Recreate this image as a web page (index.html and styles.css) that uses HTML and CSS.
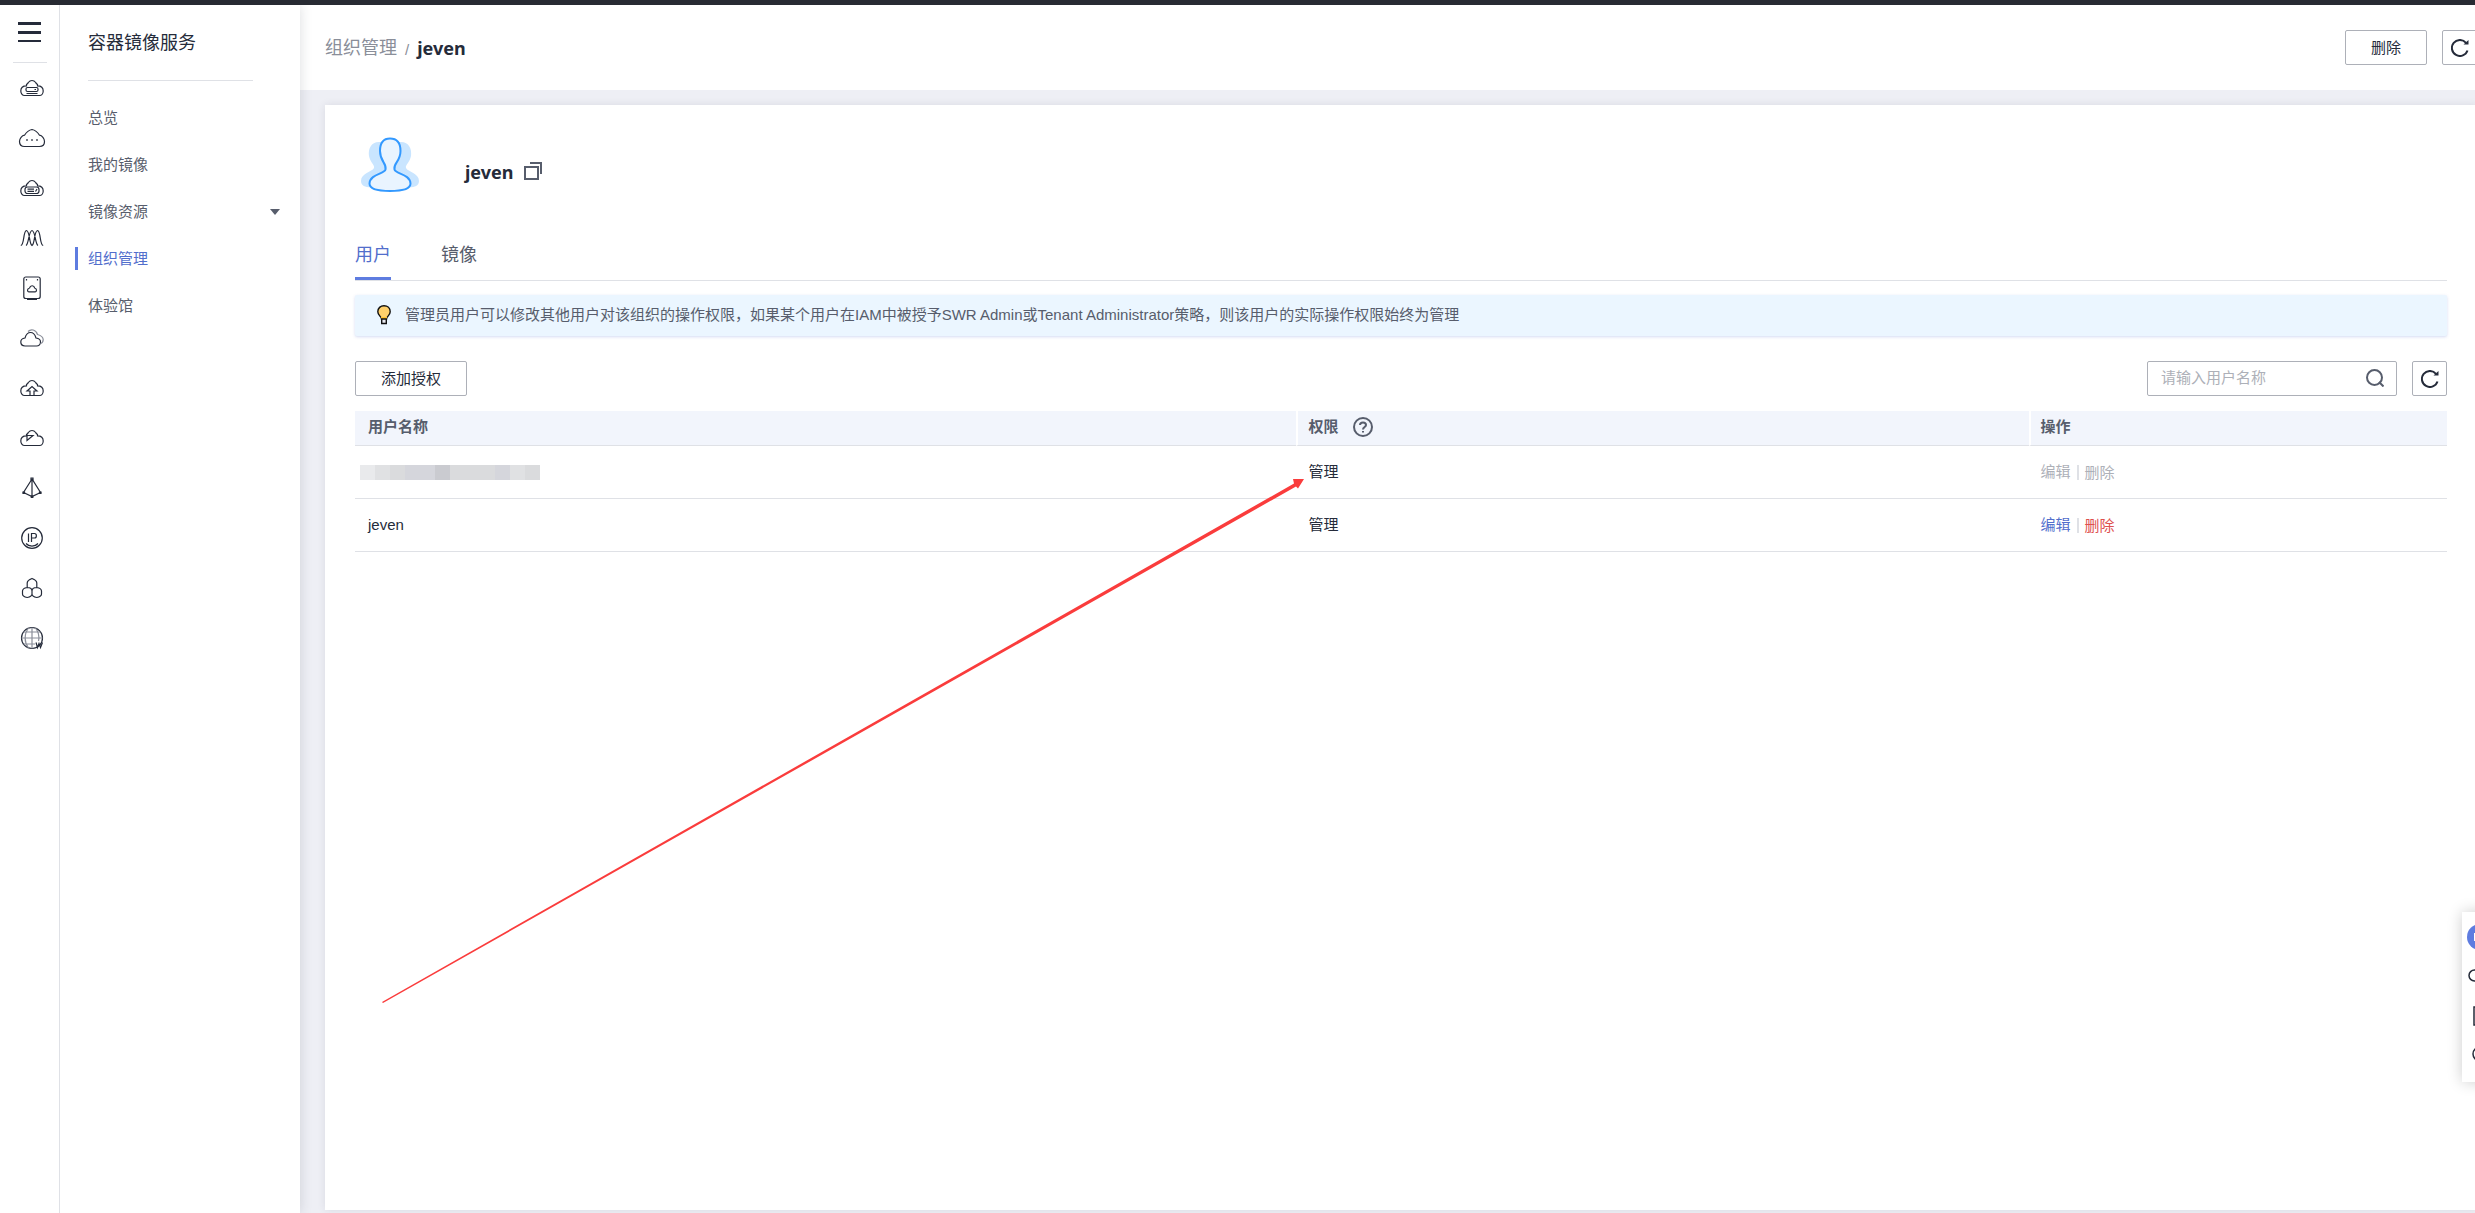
FILE: index.html
```html
<!DOCTYPE html>
<html lang="zh-CN">
<head>
<meta charset="utf-8">
<title>容器镜像服务</title>
<link rel="stylesheet" href="styles.css">
</head>
<body>
<svg class="defs" aria-hidden="true">
  <symbol id="cloud" viewBox="0 0 24 24"><path d="M4.500 19.500C2.300 19.500.8 17.200.8 15 .8 12 3 9.800 6.500 9.800V8.500C7.500 7.800 8 7.300 8.300 6.500 9.500 5 10.500 4.500 12 4.500S14.500 5 15.700 6.500C16 7.300 16.500 7.800 17.500 8.500V9.800C21 9.800 23.200 12 23.200 15 23.200 17.200 21.700 19.500 19.500 19.500Z"/></symbol>
  <symbol id="refresh" viewBox="0 0 18 18"><path d="M16.500 11.500A8 8 0 1 1 15 3.800" fill="none" stroke="currentColor" stroke-width="2"/><path d="M17.500 1V5.500H12.500Z" fill="currentColor"/></symbol>
</svg>
<div class="topbar"></div>
<div class="layout">
  <nav class="rail" aria-label="服务">
    <button class="menu" aria-label="菜单"><svg width="23" height="20"><path d="M0 0H23V3H0ZM0 9H23V12H0ZM0 18H23V20H0Z" fill="currentColor"/></svg></button>
    <a href="#" aria-label="云服务器"><svg viewBox="0 0 24 24"><use href="#cloud" width="24" height="24"/><rect x="6" y="11.500" width="12" height="4" rx="1.500"/><path d="M14.500 13.500H16M6.500 17.500H17.500"/></svg></a>
    <a href="#" aria-label="弹性云"><svg viewBox="0 0 24 24"><path d="M4.500 20.500C1.500 20.500-.5 18.500-.5 15.500S2 9.500 4.500 9.200C6.500 6 9 4 12 3.500 15 4 17.500 6 19.500 9.200 22 9.500 24.500 12.500 24.500 15.500S22.500 20.500 19.500 20.500Z"/><path d="M7 13v2M12 13v2M17 13v2"/></svg></a>
    <a href="#" aria-label="裸金属"><svg viewBox="0 0 24 24"><use href="#cloud" width="24" height="24"/><rect x="5" y="11" width="14" height="6.500" rx="2.500"/><path d="M7.500 13.200H14M7.500 15.300H14M15.500 15.500 17 13"/></svg></a>
    <a href="#" aria-label="伸缩"><svg viewBox="0 0 24 24"><path d="M.8 19.500C4.500 19 3 5 6.500 4.500 10 5 9 18 12 19.500 15 18 14 5 17.500 4.500 21 5 19.500 19 23.200 19.500M6 19.500C9 18 8.500 5 12 4.500 15.500 5 15 18 18 19.500"/></svg></a>
    <a href="#" aria-label="硬盘"><svg viewBox="0 0 24 24"><rect x="3.800" y="1" width="16.400" height="21.500" rx="2"/><path d="M6.500 3v1.500M17.500 3v1.500M7 23.300h10M9 15.800C7 15.800 7 12.500 9.500 12 10.500 8.800 14 9.200 14.700 12 17 12.500 17 15.800 15 15.800Z"/></svg></a>
    <a href="#" aria-label="对象存储"><svg viewBox="0 0 24 24"><path d="M5 20C2 20 .8 18 .8 16S2.500 12.300 5 12C6 8.500 8 6.500 10.500 6.500S15 8.500 16 12C18.500 12.300 20.500 14 20.500 16S19 20 16.500 20Z"/><path class="faint" d="M8 5.500C11 2.500 16 3.500 17.500 8.500 20 9.200 23 10.500 23.200 13.500 23.200 15.500 22.500 17 20.500 17.500"/></svg></a>
    <a href="#" aria-label="云备份"><svg viewBox="0 0 24 24"><use href="#cloud" width="24" height="24"/><path d="M10 19.500V15H7L12 10.500 17 15H14V19.500"/></svg></a>
    <a href="#" aria-label="虚拟私有云"><svg viewBox="0 0 24 24"><use href="#cloud" width="24" height="24"/><path d="M7 8.500V14.500L13 9.500H7.500"/></svg></a>
    <a href="#" aria-label="负载均衡"><svg viewBox="0 0 24 24"><path d="M12 3V21M12 3 3.500 16.500 12 20.500 20.500 16.500Z"/><path d="M11 2h2v2h-2ZM3 16h1.500v1.500H3ZM19.500 16H21v1.500h-1.500ZM11.300 20h1.500v1.500h-1.500Z"/></svg></a>
    <a href="#" aria-label="弹性公网IP"><svg viewBox="0 0 24 24"><circle cx="12" cy="12" r="10.300"/><path d="M8.500 7.500V16M11.500 16V7.500H14.500C17 7.500 17 12 14.500 12H11.500M6 17.500C9 21 15 21 18 17.500"/></svg></a>
    <a href="#" aria-label="容器"><svg viewBox="0 0 24 24"><path d="M12 2.500C14.500 3.500 16.800 4.500 16.800 7V11.500C14.500 11.500 12 12.500 12 15 12 12.500 9.500 11.500 7.200 11.500V7C7.200 4.500 9.500 3.500 12 2.500ZM7.200 11.500C4.500 12 2.500 13 2.500 15V18C2.500 20 4.500 21 7.200 21.500 9.500 21 12 20 12 18V15M16.800 11.500C19.500 12 21.500 13 21.500 15V18C21.500 20 19.500 21 16.800 21.500 14.500 21 12 20 12 18"/></svg></a>
    <a href="#" aria-label="域名"><svg viewBox="0 0 24 24"><circle cx="12" cy="12" r="10.500"/><path class="faint" d="M12 1.500V22.500M1.500 12H22.500M3.500 6H20.500M3.500 18H15M8.500 2C4 8 4 16 8.500 22M15.500 2C18.500 6 19.500 11 18.500 15"/><path d="M16 16.500 17.500 21.500 19 17.500 20.500 21.500 22.500 16.500"/></svg></a>
  </nav>
  <nav class="sidenav" aria-label="容器镜像服务">
    <h2>容器镜像服务</h2>
    <a href="#">总览</a>
    <a href="#">我的镜像</a>
    <a href="#">镜像资源<svg width="10" height="6"><path d="M0 0H10L5 6Z" fill="currentColor"/></svg></a>
    <a href="#" class="active">组织管理</a>
    <a href="#">体验馆</a>
  </nav>
  <main class="main">
    <header class="header">
      <div class="crumbs"><a href="#">组织管理</a><span>/</span><h1>jeven</h1></div>
      <div class="actions">
        <button class="btn">删除</button>
        <button class="btn icon" aria-label="刷新"><svg width="18" height="18"><use href="#refresh"/></svg></button>
      </div>
    </header>
    <section class="card">
      <div class="profile">
        <svg width="60" height="56" viewBox="0 0 60 56">
          <path d="M19 5C11 5 8 12 9 19 10 25 15 28 14 31 12 35 1 36 1 44 1 50 8 51 15 50H45C52 51 59 50 59 44 59 36 48 35 46 31 45 28 50 25 51 19 52 12 49 5 41 5Z" fill="#c9e5ff"/>
          <path d="M30 1.500C22.500 1.500 20 7 20 14 20 25 27 26 25.500 32.500 24.500 37 10 37 9.500 46.500 9.500 52 19 54 30 54S50.500 52 50.500 46.500C50 37 35.500 37 34.500 32.500 33 26 40.500 25 40.500 14 40.500 7 37.500 1.500 30 1.500Z" fill="#e9f4ff" stroke="#3399ff" stroke-width="2"/>
        </svg>
        <strong>jeven</strong>
        <button class="copy" aria-label="复制"><svg width="18" height="18"><path d="M1 5H14V17H1ZM6 1H17V12" fill="none" stroke="currentColor" stroke-width="2"/></svg></button>
      </div>
      <div class="tabs" role="tablist">
        <button role="tab" aria-selected="true">用户</button>
        <button role="tab" aria-selected="false">镜像</button>
      </div>
      <div class="notice">
        <svg width="14" height="20" viewBox="0 0 14 20"><path d="M4.500 14C4.500 11.500 .8 10.500 .8 6.800 .8 3 3.500.800 7 .800S13.200 3 13.200 6.800C13.200 10.500 9.500 11.500 9.500 14Z" fill="#ffd06b" stroke="#111" stroke-width="1.400"/><path d="M4 12H10V14H4Z" fill="#ffc02e"/><path d="M4.700 14H9.300V18.500H4.700Z" fill="#e8e8ee" stroke="#111" stroke-width="1.400"/></svg>
        <p>管理员用户可以修改其他用户对该组织的操作权限，如果某个用户在IAM中被授予SWR Admin或Tenant Administrator策略，则该用户的实际操作权限始终为管理</p>
      </div>
      <div class="toolbar">
        <button class="btn">添加授权</button>
        <form class="search">
          <input type="text" placeholder="请输入用户名称" aria-label="请输入用户名称">
          <button type="button" aria-label="搜索"><svg width="18" height="18"><circle cx="8.500" cy="8.500" r="7.500" fill="none" stroke="currentColor" stroke-width="2"/><path d="M13 13 17.500 17.500" fill="none" stroke="currentColor" stroke-width="2"/></svg></button>
        </form>
        <button class="btn icon" aria-label="刷新"><svg width="18" height="18"><use href="#refresh"/></svg></button>
      </div>
      <table>
        <thead>
          <tr><th class="c-name">用户名称</th><th class="c-perm"><span class="with-help">权限<svg width="20" height="20"><circle cx="10" cy="10" r="9"/><path d="M7 8C7 4.500 13 4.500 13 8 13 10 10 10 10 12.500M10 14V15.500"/></svg></span></th><th class="c-op">操作</th></tr>
        </thead>
        <tbody>
          <tr><td><span class="mosaic"><i></i><i></i><i></i><i></i><i></i><i></i><i></i><i></i><i></i><i></i><i></i><i></i></span></td><td>管理</td><td><span class="ops off"><button disabled>编辑</button><button disabled>删除</button></span></td></tr>
          <tr><td>jeven</td><td>管理</td><td><span class="ops"><button>编辑</button><button class="danger">删除</button></span></td></tr>
        </tbody>
      </table>
    </section>
  </main>
</div>
<svg class="arrow" width="924" height="526" viewBox="0 0 924 526"><path d="M1 524 913 5.500 912 1 923 1 917 10.500 915 8.500 2 525Z" fill="#fa3c3c"/></svg>
<aside class="float" aria-label="帮助">
  <svg width="26" height="150" viewBox="0 0 26 150"><circle cx="13" cy="14" r="13" fill="#5e7ce0"/><path d="M7 10H19V18H7Z" fill="#fff"/><g fill="none" stroke="#252b3a" stroke-width="1.500"><path d="M9 47H7.500A1.500 1.500 0 0 0 7.500 58H9Z"/><path d="M7 84H20V102H7Z"/><circle cx="13" cy="131" r="7"/></g></svg>
</aside>
</body>
</html>
```
FILE: styles.css
```css
* { box-sizing: border-box; }
body {
  margin: 0;
  min-height: 100vh;
  display: flex;
  flex-direction: column;
  overflow: hidden;
  background: #eeeff5;
  color: #252b3a;
  font: 400 15px/20px "Liberation Sans", "Noto Sans CJK SC", sans-serif;
}
button, input { font: inherit; color: inherit; }
button { background: none; border: 0; padding: 0; cursor: pointer; }
a { color: inherit; text-decoration: none; }
svg { display: block; flex: none; }
h1, h2, p { margin: 0; font-weight: inherit; }
.defs { display: none; }
.topbar { height: 5px; background: #282b33; }
.layout { flex: 1; display: flex; }

.rail {
  width: 60px;
  flex: none;
  background: #fff;
  border-right: 1px solid #dfe1e6;
  display: flex;
  flex-direction: column;
  position: relative;
  z-index: 2;
}
.menu {
  width: 34px;
  height: 58px;
  margin-left: 13px;
  padding: 0 5px 4px;
  border-bottom: 1px solid #dfe1e6;
}
.rail a { height: 50px; padding: 13px 0 13px 20px; }
.rail a svg {
  width: 24px;
  height: 24px;
  overflow: visible;
  fill: none;
  stroke: #252b3a;
  stroke-width: 1.2;
}
.rail .faint { stroke: #8a8e99; }

.sidenav {
  width: 240px;
  flex: none;
  background: #fff;
  color: #575d6c;
  box-shadow: 0 0 12px rgba(37, 43, 58, .16);
  position: relative;
  z-index: 1;
}
.sidenav h2 {
  margin: 0 47px 25px 28px;
  height: 76px;
  padding-top: 28px;
  border-bottom: 1px solid #dfe1e6;
  font-size: 18px;
  color: #252b3a;
}
.sidenav a {
  display: flex;
  align-items: center;
  justify-content: space-between;
  height: 23px;
  margin: 0 20px 24px 15px;
  padding-left: 10px;
  border-left: 3px solid transparent;
}
.sidenav .active { color: #526ecc; border-color: #5e7ce0; }

.main { flex: 1; min-width: 0; margin-right: -2px; display: flex; flex-direction: column; }
.header {
  height: 85px;
  padding-left: 25px;
  background: #fff;
  display: flex;
  align-items: center;
  justify-content: space-between;
}
.crumbs { display: flex; align-items: center; gap: 8px; color: #8a8e99; font-size: 18px; }
.crumbs span { font-size: 15px; padding-top: 4px; }
.crumbs h1, .profile strong { font: 700 18px/20px "Noto Sans", sans-serif; color: #252b3a; }
.actions { display: flex; gap: 15px; }
.btn {
  height: 35px;
  padding: 0 25px;
  border: 1px solid #adb0b8;
  border-radius: 2px;
  background: #fff;
}
.btn.icon { width: 35px; padding: 0 8px; }

.card {
  flex: 1;
  margin: 15px 0 3px 25px;
  padding: 0 30px;
  background: #fff;
  box-shadow: 0 0 8px rgba(37, 43, 58, .1);
}
.profile { height: 118px; padding: 32px 5px 0; display: flex; }
.profile strong { margin: 25px 11px 0 45px; }
.copy { height: 18px; margin-top: 25px; color: #575d6c; }
.tabs { display: flex; gap: 50px; height: 58px; border-bottom: 1px solid #dfe1e6; }
.tabs button { font-size: 18px; color: #575d6c; padding-top: 10px; border-bottom: 3px solid transparent; }
.tabs [aria-selected="true"] { color: #526ecc; border-color: #5e7ce0; }
.notice {
  display: flex;
  align-items: center;
  gap: 14px;
  height: 41px;
  margin: 14px 0 25px;
  padding: 0 22px 2px;
  border-radius: 2px;
  background: #ebf6ff;
  box-shadow: 0 1px 3px rgba(82, 110, 204, .25);
  color: #575d6c;
}
.toolbar { display: flex; gap: 15px; margin-bottom: 15px; }
.search {
  display: flex;
  align-items: center;
  width: 250px;
  height: 35px;
  margin-left: auto;
  padding: 0 12px 1px 13px;
  border: 1px solid #adb0b8;
  border-radius: 2px;
  color: #575d6c;
}
.search input { flex: 1; min-width: 0; padding: 0; border: 0; outline: 0; background: none; }
.search input::placeholder { color: #adb0b8; opacity: 1; }

table { width: 100%; table-layout: fixed; border-collapse: separate; border-spacing: 0; }
.c-name { width: 45%; }
.c-perm { width: 35%; }
.c-op { width: 20%; }
th, td { padding: 0 13px; text-align: left; border-bottom: 1px solid #dfe1e6; }
th { height: 35px; padding-bottom: 2px; background: #f2f5fc; color: #575d6c; font-weight: 700; }
th + th { border-left: 2px solid #fff; padding-left: 10px; }
td { height: 53px; }
td + td { padding-left: 12px; }
.with-help { display: flex; align-items: center; gap: 15px; }
.with-help svg { fill: none; stroke: #575d6c; stroke-width: 2; }
.mosaic { display: flex; height: 15px; margin-left: -8px; }
.mosaic i { width: 15px; background: #dadbdd; }
.mosaic i:nth-child(1) { background: #e9eaec; }
.mosaic i:nth-child(2), .mosaic i:nth-child(11) { background: #e0e1e3; }
.mosaic i:nth-child(4), .mosaic i:nth-child(5), .mosaic i:nth-child(10) { background: #d5d6dc; }
.mosaic i:nth-child(6) { background: #cacbd0; }
.ops { display: inline-flex; align-items: center; color: #526ecc; }
.ops button + button { border-left: 2px solid #dfe1e6; margin-left: 6px; padding-left: 6px; line-height: 15px; }
.ops .danger { color: #de504e; border-color: #dfe1e6; }
.ops.off { color: #adb0b8; }

.arrow { position: absolute; left: 381px; top: 478px; pointer-events: none; }
.float {
  position: fixed;
  right: -23px;
  top: 912px;
  width: 36px;
  height: 170px;
  padding: 11px 5px;
  background: #fff;
  box-shadow: 0 0 15px rgba(0, 0, 0, .2);
}
```
